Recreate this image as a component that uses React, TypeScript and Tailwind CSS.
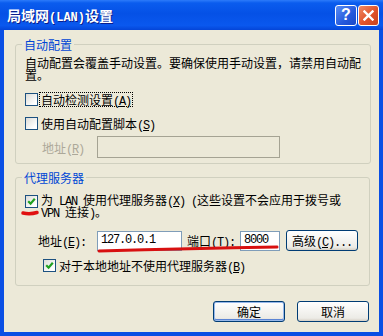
import React from 'react';

// ASCII runs in the old 宋体 dialogs are half-width, so they get a mono face
const Mono = ({ children }: { children: React.ReactNode }) => (
  <span className="font-['Liberation_Mono','Noto_Sans_CJK_SC',monospace] text-[12px] tracking-[-1.2px] leading-[0] whitespace-pre">{children}</span>
);

const Key = ({ k }: { k: string }) => (
  <Mono>
    (<span className="underline underline-offset-[1px]">{k}</span>)
  </Mono>
);

const CheckBox = ({ checked }: { checked?: boolean }) => (
  <span className="w-[13px] h-[13px] shrink-0 border border-[#1C5180] bg-[linear-gradient(135deg,#DCDCD7,#FFFFFF_80%)] flex items-center justify-center">
    {checked && (
      <svg width="9" height="9" viewBox="0 0 9 9">
        <path d="M1.2 4.2 L3.6 6.6 L7.8 1.8" stroke="#21A121" strokeWidth="2.2" fill="none" />
      </svg>
    )}
  </span>
);

const XpButton = ({ children, primary }: { children: React.ReactNode; primary?: boolean }) => (
  <button
    className={
      primary
        ? 'w-[72px] h-[21px] rounded-[3px] border border-[#003C74] bg-[linear-gradient(to_bottom,#FFFFFF,#ECEBE6_85%,#D6D0C5)] shadow-[inset_0_0_0_1px_#97B8EA,inset_0_-1px_0_1px_#5B84D4] text-[12px] leading-[13px] text-black'
        : 'w-[72px] h-[21px] rounded-[3px] border border-[#003C74] bg-[linear-gradient(to_bottom,#FFFFFF,#ECEBE6_85%,#D6D0C5)] text-[12px] leading-[13px] text-black'
    }
  >
    {children}
  </button>
);

export default function App() {
  return (
    <div className="relative w-[383px] h-[336px] flex flex-col bg-[#0A4FE4] overflow-hidden font-['Noto_Sans_CJK_SC',sans-serif] text-black">
      {/* Title bar */}
      <div className="h-[30px] shrink-0 flex items-center justify-between pl-[7px] pr-[4px] bg-[linear-gradient(to_bottom,#2C7BFA_0%,#0A5CEE_10%,#0551E6_45%,#0A58EE_85%,#0445D8_100%)]">
        <span className="text-white font-bold text-[14px] leading-[16px] [text-shadow:1px_1px_0_#0A1E8C]">
          局域网
          <span className="font-['Liberation_Mono','Noto_Sans_CJK_SC',monospace] text-[12px] font-bold leading-[0]">(LAN)</span>
          设置
        </span>
        <div className="flex gap-[1px]">
          <div className="w-[22px] h-[21px] rounded-[3px] border border-white bg-[linear-gradient(135deg,#5A8DF5,#2459DC_60%,#1B49C8)] flex items-center justify-center">
            <span className="text-white font-bold text-[16px] leading-[16px] font-['Liberation_Sans',sans-serif]">?</span>
          </div>
          <div className="w-[21px] h-[21px] rounded-[3px] border border-white bg-[linear-gradient(135deg,#F08A66,#E0532B_55%,#C7431E)] flex items-center justify-center">
            <svg width="11" height="11" viewBox="0 0 11 11">
              <path d="M1.5 1.5 L9.5 9.5 M9.5 1.5 L1.5 9.5" stroke="white" strokeWidth="2.4" strokeLinecap="square" />
            </svg>
          </div>
        </div>
      </div>

      {/* Client area */}
      <div className="flex-1 mx-[4px] mb-[4px] bg-[#ECE9D8] flex flex-col text-[12px] leading-[12px]">
        {/* 自动配置 */}
        <fieldset className="mt-[8px] ml-[11px] mr-[9px] border border-[#D0D0BF] rounded-[3px] px-[9px] pb-[5px]">
          <legend className="-ml-[3px] px-[2px] text-[#0046D5] leading-[13px]">自动配置</legend>
          <p className="mt-[6px] leading-[12px] whitespace-nowrap">
            自动配置会覆盖手动设置。要确保使用手动设置，请禁用自动配
            <br />
            置。
          </p>
          <div className="mt-[11px] h-[15px] flex items-center">
            <CheckBox />
            <span className="ml-[1px] px-[1px] border border-dotted border-black leading-[13px]">
              自动检测设置<Key k="A" />
            </span>
          </div>
          <div className="mt-[10px] h-[13px] flex items-center">
            <CheckBox />
            <span className="ml-[3px] leading-[13px]">
              使用自动配置脚本<Key k="S" />
            </span>
          </div>
          <div className="mt-[6px] h-[22px] flex items-center pl-[17px]">
            <span className="w-[55px] text-[#ACA899] leading-[13px]">
              地址<Key k="R" />
            </span>
            <div className="w-[183px] h-[22px] border border-[#A5A393] bg-[#ECE9D8]" />
          </div>
        </fieldset>

        {/* 代理服务器 */}
        <fieldset className="mt-[7px] ml-[11px] mr-[9px] border border-[#D0D0BF] rounded-[3px] px-[9px] pb-[13px]">
          <legend className="-ml-[3px] px-[2px] text-[#0046D5] leading-[13px]">代理服务器</legend>
          <div className="mt-[10px] flex items-start">
            <span className="mt-[1px]">
              <CheckBox checked />
            </span>
            <span className="ml-[3px] leading-[12px] whitespace-nowrap">
              为<Mono> LAN </Mono>使用代理服务器<Key k="X" /><Mono> (</Mono>这些设置不会应用于拨号或
              <br />
              <Mono>VPN </Mono>连接<Mono>)</Mono>。
            </span>
          </div>
          <div className="mt-[12px] h-[21px] flex items-center pl-[13px]">
            <span className="w-[59px] leading-[13px]">
              地址<Key k="E" /><Mono>:</Mono>
            </span>
            <div className="w-[85px] h-[20px] border border-[#7F9DB9] bg-white flex items-center px-[3px]">
              <span className="font-['Liberation_Mono',monospace] text-[12px] tracking-[-1.2px] leading-[13px]">127.0.0.1</span>
            </div>
            <span className="ml-[5px] w-[53px] leading-[13px]">
              端口<Key k="T" /><Mono>:</Mono>
            </span>
            <div className="w-[40px] h-[20px] border border-[#7F9DB9] bg-white flex items-center px-[3px]">
              <span className="font-['Liberation_Mono',monospace] text-[12px] tracking-[-1.2px] leading-[13px]">8000</span>
            </div>
            <div className="ml-[6px]">
              <XpButton>
                高级<Key k="C" />
                <Mono>...</Mono>
              </XpButton>
            </div>
          </div>
          <div className="mt-[8px] h-[13px] flex items-center pl-[18px]">
            <CheckBox checked />
            <span className="ml-[3px] leading-[13px]">
              对于本地地址不使用代理服务器<Key k="B" />
            </span>
          </div>
        </fieldset>

        <div className="mt-[15px] flex justify-end gap-[12px] pr-[10px]">
          <XpButton primary>确定</XpButton>
          <XpButton>取消</XpButton>
        </div>
      </div>

      {/* hand-drawn red marks over the screenshot */}
      <svg className="absolute inset-0 pointer-events-none" width="383" height="336" viewBox="0 0 383 336">
        <path d="M23 213 Q30 214.5 37 212.5" stroke="#E01010" strokeWidth="3.5" strokeLinecap="round" fill="none" />
        <path d="M99 251 Q190 248.5 277 247" stroke="#D81010" strokeWidth="3" strokeLinecap="round" fill="none" />
      </svg>
    </div>
  );
}
